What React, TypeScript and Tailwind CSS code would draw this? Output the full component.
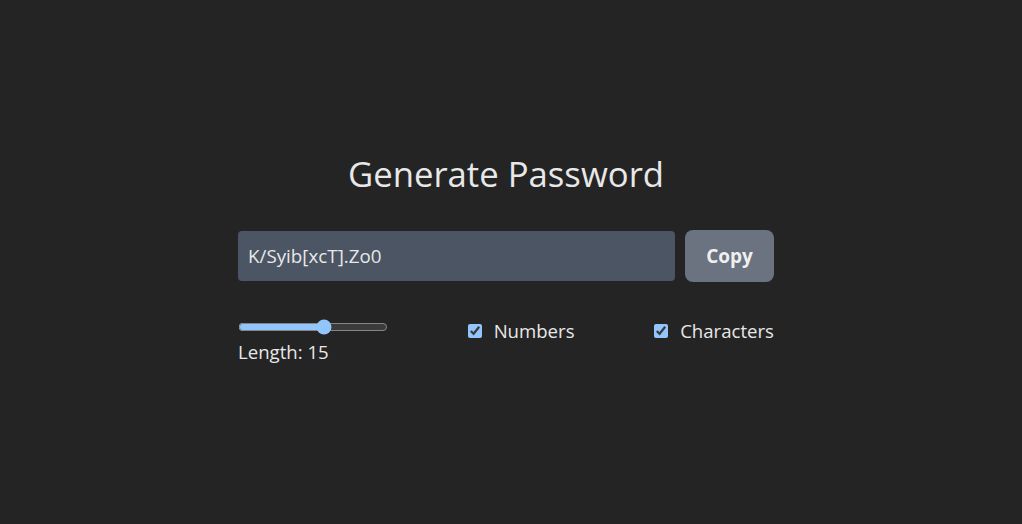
import { useState } from "react";

export default function App() {
  const [length, setLength] = useState(15);
  const [numbers, setNumbers] = useState(true);
  const [chars, setChars] = useState(true);

  return (
    <div className="min-h-screen w-full bg-[#242424] text-[#e8e8e8] [color-scheme:dark] flex items-center justify-center pr-[10px] pb-[8px] font-['Open_Sans',sans-serif]">
      <div className="w-[536px] flex flex-col">
        <h1 className="text-[34.7px] leading-[44px] text-center">Generate Password</h1>

        <div className="mt-[34px] flex items-center gap-[10px]">
          <input
            readOnly
            value="K/Syib[xcT].Zo0"
            className="flex-1 h-[50px] rounded-[4px] bg-[#4b5563] px-[10px] text-[18.8px] text-[#e8e8e8] outline-none"
          />
          <button className="h-[52px] w-[89px] rounded-[8px] bg-[#6b7280] text-[19px] font-bold text-[#f0f0f0]">
            Copy
          </button>
        </div>

        <div className="mt-[37px] flex items-start justify-between">
          <div className="flex flex-col">
            <input
              type="range"
              min={8}
              max={20}
              value={length}
              onChange={(e) => setLength(Number(e.target.value))}
              className="w-[150px] accent-[#93c5fd] m-0"
            />
            <label className="text-[18.6px] leading-[24px] mt-[5px]">Length: {length}</label>
          </div>
          <label className="flex items-center gap-[12px] text-[18.6px] leading-[24px]">
            <input
              type="checkbox"
              checked={numbers}
              onChange={() => setNumbers(!numbers)}
              className="accent-[#93c5fd] w-[14px] h-[14px] m-0"
            />
            Numbers
          </label>
          <label className="flex items-center gap-[12px] text-[18.6px] leading-[24px]">
            <input
              type="checkbox"
              checked={chars}
              onChange={() => setChars(!chars)}
              className="accent-[#93c5fd] w-[14px] h-[14px] m-0"
            />
            Characters
          </label>
        </div>
      </div>
    </div>
  );
}
